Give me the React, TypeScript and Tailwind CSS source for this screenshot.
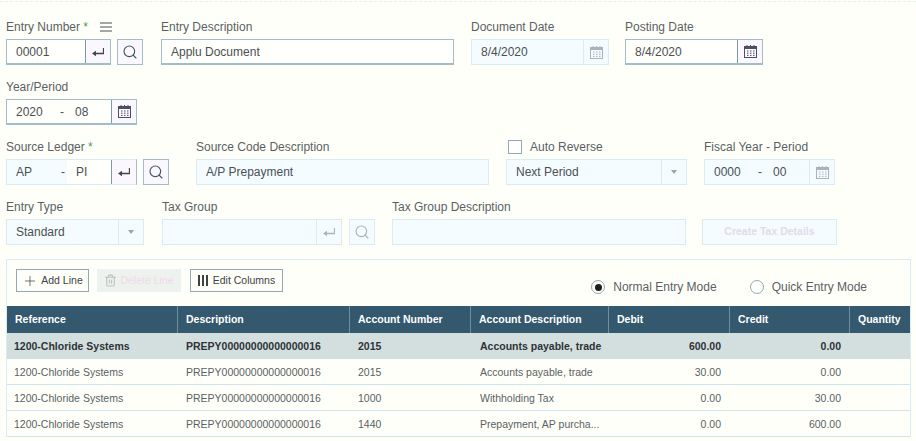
import type { ReactNode } from "react";
import { Search, Plus, Trash2 } from "lucide-react";

const ROWS = [
  { ref: "1200-Chloride Systems", desc: "PREPY00000000000000016", acct: "2015", acctDesc: "Accounts payable, trade", debit: "600.00", credit: "0.00", active: true },
  { ref: "1200-Chloride Systems", desc: "PREPY00000000000000016", acct: "2015", acctDesc: "Accounts payable, trade", debit: "30.00", credit: "0.00", active: false },
  { ref: "1200-Chloride Systems", desc: "PREPY00000000000000016", acct: "1000", acctDesc: "Withholding Tax", debit: "0.00", credit: "30.00", active: false },
  { ref: "1200-Chloride Systems", desc: "PREPY00000000000000016", acct: "1440", acctDesc: "Prepayment, AP purcha...", debit: "0.00", credit: "600.00", active: false },
];

const GRID = "grid grid-cols-[171px_172px_121px_138px_121px_120px_62px]";

function CalendarIcon({ muted }: { muted?: boolean }) {
  const c = muted ? "#a9b4ba" : "#4a4f63";
  return (
    <svg width="15" height="15" viewBox="0 0 15 15">
      <rect x="1.5" y="2.5" width="12" height="11" fill="none" stroke={c} />
      <rect x="1" y="2" width="13" height="3" fill={c} />
      <path d="M4 1v2M7.5 1v2M11 1v2" stroke={c} />
      <path d="M4 7h1.5M7 7h1.5M10 7h1.5M4 9.2h1.5M7 9.2h1.5M10 9.2h1.5M4 11.4h1.5M7 11.4h1.5M10 11.4h1.5" stroke={c} />
    </svg>
  );
}

function MenuIcon() {
  return (
    <svg width="12" height="10" viewBox="0 0 12 10" className="ml-[12px]">
      <path d="M0 1h12M0 5h12M0 9h12" stroke="#4a5054" strokeWidth="1.2" />
    </svg>
  );
}

function EnterIcon({ off }: { off?: boolean }) {
  const c = off ? "#a9b4ba" : "#3f4650";
  return (
    <svg width="12" height="10" viewBox="0 0 12 10">
      <path d="M11.5 1v5.5H3" fill="none" stroke={c} strokeWidth="1.3" />
      <path d="M0 6.5L4 3.8v5.4z" fill={c} />
    </svg>
  );
}

function Label({ children, req }: { children: string; req?: boolean }) {
  return (
    <div className="h-[16px] leading-[16px] mb-[4px] text-[#5a5f63] whitespace-nowrap">
      {children}
      {req && <span className="text-[#3fa34d]"> *</span>}
    </div>
  );
}

function Box({ w, off, text, side }: { w: string; off?: boolean; text?: ReactNode; side?: ReactNode }) {
  return (
    <div className={`${w} h-[26px] flex border ${off ? "border-[#d9ecf2] bg-[#f4fcff]" : "border-[#a3bcc7] border-b-2 bg-[#fffffb]"}`}>
      <div className="flex-1 pl-[9px] leading-[25px] text-[#4a5054] whitespace-nowrap overflow-hidden">{text}</div>
      {side && (
        <div className={`w-[25px] shrink-0 flex items-center justify-center border-l ${off ? "border-[#d9ecf2]" : "border-[#7d9aa8] bg-[#fbf7ff]"}`}>
          {side}
        </div>
      )}
    </div>
  );
}

function Period({ a, b }: { a: string; b: string }) {
  return (
    <span className="flex">
      <span className="w-[44px]">{a}</span>
      <span className="w-[15px]">-</span>
      <span>{b}</span>
    </span>
  );
}

function SearchBtn({ off }: { off?: boolean }) {
  return (
    <div className={`w-[26px] h-[26px] flex items-center justify-center border ${off ? "border-[#d9ecf2] bg-[#f4fcff]" : "border-[#a3bcc7] bg-[#fbf7ff]"}`}>
      <Search size={16} strokeWidth={1.7} color={off ? "#a9b4ba" : "#3f5566"} />
    </div>
  );
}

function Caret() {
  return <span className="w-0 h-0 border-x-[3.5px] border-x-transparent border-t-[4px] border-t-[#9aa5ab]" />;
}

export default function App() {
  return (
    <div className="w-[916px] h-[441px] overflow-hidden bg-[#fffffa] font-['Liberation_Sans',Arial,sans-serif] text-[12px]">
      <div className="h-[2px] mt-px border-t border-dashed border-[#e2f0f2]" />

      <div className="pl-[6px] pt-[16px]">
        {/* first row */}
        <div className="flex">
          <div className="w-[155px]">
            <div className="flex items-center h-[16px] mb-[4px]">
              <span className="text-[#5a5f63]">Entry Number <span className="text-[#3fa34d]">*</span></span>
              <MenuIcon />
            </div>
            <div className="flex gap-[6px]">
              <Box w="w-[105px]" text="00001" side={<EnterIcon />} />
              <SearchBtn />
            </div>
          </div>
          <div className="w-[310px]">
            <Label>Entry Description</Label>
            <Box w="w-[293px]" text="Applu Document" />
          </div>
          <div className="w-[154px]">
            <Label>Document Date</Label>
            <Box w="w-[138px]" off text="8/4/2020" side={<CalendarIcon muted />} />
          </div>
          <div>
            <Label>Posting Date</Label>
            <Box w="w-[138px]" text="8/4/2020" side={<CalendarIcon />} />
          </div>
        </div>

        {/* year and period */}
        <div className="mt-[14px]">
          <Label>Year/Period</Label>
          <Box w="w-[131px] mt-[1px]" text={<Period a="2020" b="08" />} side={<CalendarIcon />} />
        </div>

        {/* source ledger */}
        <div className="flex mt-[14px]">
          <div className="w-[190px]">
            <Label req>Source Ledger</Label>
            <div className="flex gap-[6px]">
              <div className="w-[131px] h-[26px] flex border border-[#a3bcc7] border-l-[#d9ecf2] border-t-[#d9ecf2] border-b-[#d9ecf2] bg-[#f4fcff]">
                <div className="w-[60px] pl-[9px] leading-[25px] text-[#4a5054] flex">
                  <span className="flex-1">AP</span>
                  <span className="pr-[2px]">-</span>
                </div>
                <div className="flex-1 bg-[#fffffb] pl-[9px] leading-[25px] text-[#4a5054]">PI</div>
                <div className="w-[25px] flex items-center justify-center border-l border-[#7d9aa8] bg-[#fbf7ff]">
                  <EnterIcon />
                </div>
              </div>
              <SearchBtn />
            </div>
          </div>
          <div className="w-[310px]">
            <Label>Source Code Description</Label>
            <Box w="w-[293px]" off text="A/P Prepayment" />
          </div>
          <div className="w-[198px]">
            <div className="flex items-center h-[16px] mb-[4px] pl-[2px]">
              <span className="w-[14px] h-[14px] border border-[#8fa9b5] bg-white mr-[8px]" />
              <span className="text-[#5a5f63]">Auto Reverse</span>
            </div>
            <Box w="w-[181px]" off text="Next Period" side={<Caret />} />
          </div>
          <div>
            <Label>Fiscal Year - Period</Label>
            <Box w="w-[131px]" off text={<Period a="0000" b="00" />} side={<CalendarIcon muted />} />
          </div>
        </div>

        {/* tax row */}
        <div className="flex mt-[14px]">
          <div className="w-[156px]">
            <Label>Entry Type</Label>
            <Box w="w-[138px]" off text="Standard" side={<Caret />} />
          </div>
          <div className="w-[230px]">
            <Label>Tax Group</Label>
            <div className="flex gap-[7px]">
              <Box w="w-[180px]" off side={<EnterIcon off />} />
              <SearchBtn off />
            </div>
          </div>
          <div className="w-[310px]">
            <Label>Tax Group Description</Label>
            <Box w="w-[294px]" off />
          </div>
          <div className="pt-[20px]">
            <div className="w-[135px] h-[26px] border border-[#d9ecf2] bg-[#f4fcff] text-[10.5px] font-bold text-[#e3dbe6] flex items-center justify-center">
              Create Tax Details
            </div>
          </div>
        </div>
      </div>

      {/* lines panel */}
      <div className="ml-[6px] mr-[5px] mt-[14px] border-t border-l border-r border-[#d9ecf2]">
        <div className="h-[46px] pt-[9px] pl-[9px] pr-[43px] flex items-start text-[10.5px]">
          <button className="h-[23px] w-[73px] border border-[#8fa9b5] flex items-center justify-center gap-[3px] text-[#3c4347]">
            <Plus size={16} strokeWidth={1.1} />
            Add Line
          </button>
          <button className="h-[23px] w-[84px] ml-[8px] bg-[#eef2ee] flex items-center justify-center gap-[3px] text-[#f0d8e8]">
            <Trash2 size={13} color="#b9c2bc" />
            Delete Line
          </button>
          <button className="h-[23px] w-[93px] ml-[9px] border border-[#8fa9b5] flex items-center justify-center gap-[5px] text-[#3c4347]">
            <span className="flex gap-[2px]">
              <i className="w-[2px] h-[11px] bg-[#3c4347]" />
              <i className="w-[2px] h-[11px] bg-[#3c4347]" />
              <i className="w-[2px] h-[11px] bg-[#3c4347]" />
            </span>
            Edit Columns
          </button>
          <div className="ml-auto flex items-center gap-[8px] text-[12px] text-[#5a5f63] pt-[9px]">
            <span className="w-[14px] h-[14px] rounded-full border border-[#8fa9b5] flex items-center justify-center">
              <span className="w-[7px] h-[7px] rounded-full bg-[#1f1f1f]" />
            </span>
            <span>Normal Entry Mode</span>
            <span className="w-[14px] h-[14px] rounded-full border border-[#8fa9b5] ml-[25px] bg-white" />
            <span>Quick Entry Mode</span>
          </div>
        </div>

        <div className={`${GRID} h-[27px] bg-[#34586e] text-white font-bold text-[10.5px] leading-[27px]`}>
          {["Reference", "Description", "Account Number", "Account Description", "Debit", "Credit", "Quantity"].map((h, i) => (
            <div key={h} className={`pl-[8px] ${i < 6 ? "border-r border-[#6f8ea0]" : ""} whitespace-nowrap`}>{h}</div>
          ))}
        </div>

        {ROWS.map((r, i) => (
          <div
            key={i}
            className={`${GRID} h-[26px] leading-[26px] text-[10.5px] border-b border-[#cfe4ec] ${r.active ? "bg-[#d3dfdf] font-bold text-[#2e3336] border-b-0" : "text-[#5a5f63]"}`}
          >
            <div className="pl-[7px] whitespace-nowrap">{r.ref}</div>
            <div className="pl-[8px] whitespace-nowrap">{r.desc}</div>
            <div className="pl-[8px]">{r.acct}</div>
            <div className="pl-[9px] whitespace-nowrap">{r.acctDesc}</div>
            <div className="pr-[9px] text-right">{r.debit}</div>
            <div className="pr-[9px] text-right">{r.credit}</div>
            <div />
          </div>
        ))}
      </div>
    </div>
  );
}
